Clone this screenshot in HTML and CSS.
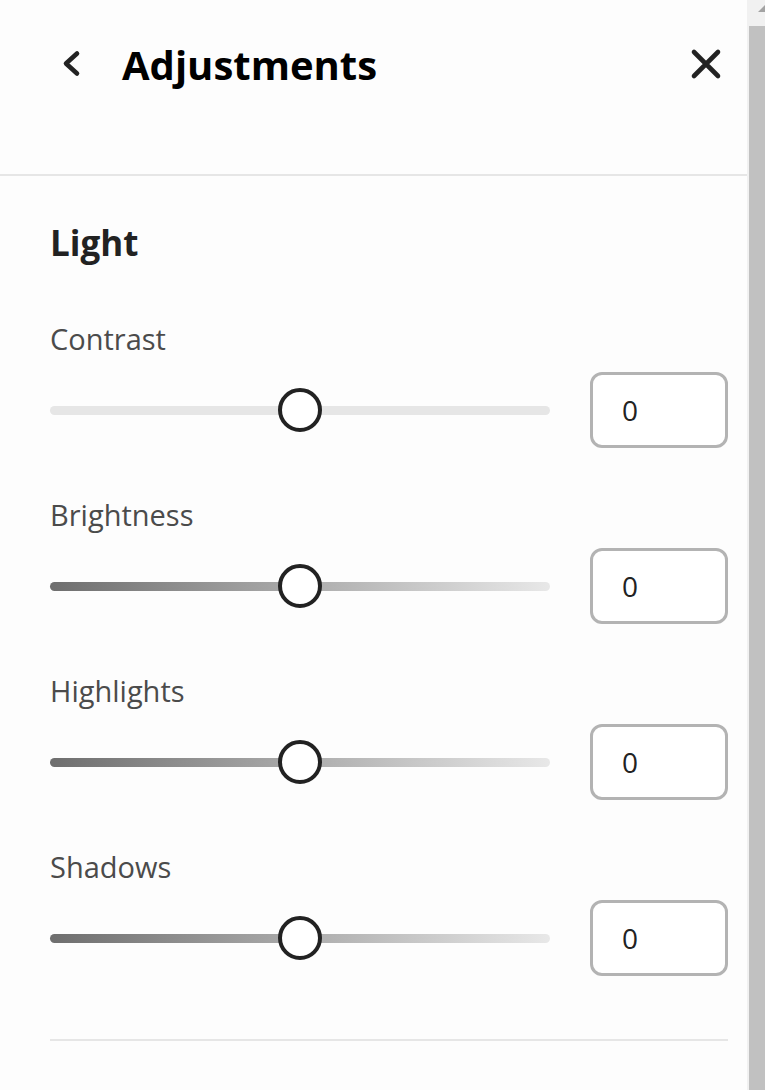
FILE: index.html
```html
<!DOCTYPE html>
<html lang="en">
<head>
<meta charset="utf-8">
<title>Adjustments</title>
<link rel="stylesheet" href="styles.css">
</head>
<body>
<div class="panel">
  <header class="header">
    <button class="icon-btn back" aria-label="Back">
      <svg width="40" height="40" viewBox="0 0 40 40"><path d="M25 9.5 L14 19.5 L25 29.5" fill="none" stroke="#222" stroke-width="4.6" stroke-linecap="round" stroke-linejoin="round"/></svg>
    </button>
    <h1 class="title">Adjustments</h1>
    <button class="icon-btn close" aria-label="Close">
      <svg width="40" height="40" viewBox="0 0 40 40"><path d="M8 8 L32 32 M32 8 L8 32" fill="none" stroke="#222" stroke-width="4.6" stroke-linecap="round"/></svg>
    </button>
  </header>
  <section class="section">
    <h2 class="section-title">Light</h2>
    <div class="control">
      <div class="label">Contrast</div>
      <div class="row">
        <div class="slider"><div class="track flat"></div><div class="thumb"></div></div>
        <div class="value">0</div>
      </div>
    </div>
    <div class="control">
      <div class="label">Brightness</div>
      <div class="row">
        <div class="slider"><div class="track grad"></div><div class="thumb"></div></div>
        <div class="value">0</div>
      </div>
    </div>
    <div class="control">
      <div class="label">Highlights</div>
      <div class="row">
        <div class="slider"><div class="track grad"></div><div class="thumb"></div></div>
        <div class="value">0</div>
      </div>
    </div>
    <div class="control">
      <div class="label">Shadows</div>
      <div class="row">
        <div class="slider"><div class="track grad"></div><div class="thumb"></div></div>
        <div class="value">0</div>
      </div>
    </div>
    <div class="divider"></div>
  </section>
</div>
<div class="scrollbar"><div class="arrow"></div><div class="sb-thumb"></div></div>
</body>
</html>
```
FILE: styles.css
```css
html, body {
  margin: 0;
  padding: 0;
  background: #fdfdfd;
  height: 100%;
  overflow: hidden;
}
body {
  font-family: "Open Sans", "Noto Sans", sans-serif;
}
.panel {
  width: 747px;
}
.header {
  box-sizing: border-box;
  height: 176px;
  border-bottom: 2px solid #e6e6e6;
  display: flex;
  align-items: flex-start;
  padding: 44px 21px 0 52px;
}
.icon-btn {
  width: 40px;
  height: 40px;
  padding: 0;
  border: 0;
  background: transparent;
  display: flex;
}
.title {
  margin: 0 0 0 30px;
  font-size: 40px;
  line-height: 40px;
  font-weight: 700;
  color: #000;
  flex: 1;
  position: relative;
  top: 1px;
}
.section {
  padding: 45px 19px 0 50px;
}
.section-title {
  margin: 0;
  font-size: 35px;
  line-height: 44px;
  font-weight: 700;
  color: #222;
}
.control {
  margin-top: 49px;
}
.section-title + .control {
  margin-top: 56px;
}
.label {
  font-size: 29px;
  line-height: 36px;
  color: #4b4b4b;
  margin-bottom: 15px;
}
.row {
  display: flex;
  align-items: center;
  gap: 40px;
  height: 76px;
}
.slider {
  flex: 1;
  position: relative;
  height: 44px;
  display: flex;
  align-items: center;
}
.track {
  width: 100%;
  height: 9px;
  border-radius: 5px;
}
.track.flat {
  background: #e6e6e6;
}
.track.grad {
  background: linear-gradient(to right, #6e6e6e, #e8e8e8);
}
.thumb {
  position: absolute;
  left: 50%;
  top: 0;
  width: 44px;
  height: 44px;
  margin-left: -22px;
  box-sizing: border-box;
  border: 4px solid #222;
  border-radius: 50%;
  background: #fff;
}
.value {
  width: 138px;
  height: 76px;
  box-sizing: border-box;
  border: 3.5px solid #b3b3b3;
  border-radius: 12px;
  background: #fff;
  padding-left: 29px;
  display: flex;
  align-items: center;
  font-size: 28px;
  color: #222;
}
.divider {
  margin-top: 63px;
  height: 2px;
  background: #e6e6e6;
}
.scrollbar {
  position: fixed;
  top: 0;
  right: 0;
  width: 18px;
  height: 100%;
  background: #f1f1f1;
  overflow: hidden;
}
.arrow {
  position: absolute;
  top: 4px;
  left: 11px;
  width: 0;
  height: 0;
  border-left: 8px solid transparent;
  border-right: 8px solid transparent;
  border-bottom: 8px solid #a3a3a3;
}
.sb-thumb {
  position: absolute;
  top: 26px;
  left: 2px;
  right: 0;
  bottom: 0;
  background: #c1c1c1;
}
```
